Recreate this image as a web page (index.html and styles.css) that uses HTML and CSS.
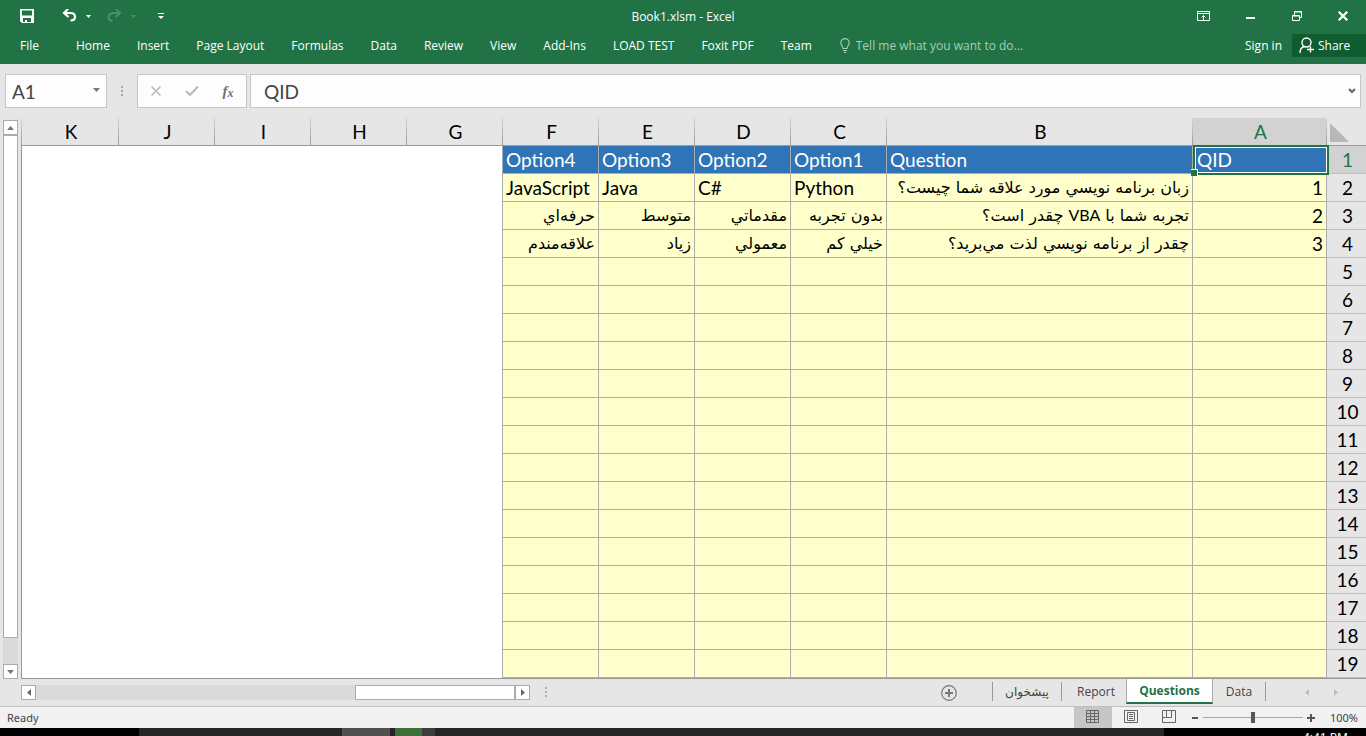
FILE: index.html
```html
<!DOCTYPE html>
<html lang="en">
<head>
<meta charset="utf-8">
<title>Book1.xlsm - Excel</title>
<link rel="stylesheet" href="styles.css">
</head>
<body>
<header class="top">
  <div class="titlebar">
    <div class="quick">
      <button class="tool save" aria-label="Save"><svg width="14" height="14" viewBox="0 0 14 14"><path d="M0 0h14v14H2L0 12zM2 1.500v5h10v-5zM3 9v4h2v-2h2v2h4V9z" fill="#fff" fill-rule="evenodd"/></svg></button>
      <button class="tool undo" aria-label="Undo"><svg width="16" height="14" viewBox="0 0 16 14"><path d="M6 0L2 4l4.500 4M2 4h6.500c6 0 6 7.500 0 7.500" fill="none" stroke="#fff" stroke-width="2.200"/></svg></button>
      <button class="tool undo-more" aria-label="Undo list"><svg width="5" height="3" viewBox="0 0 5 3"><path d="M0 0h5L2.500 3z" fill="#fff"/></svg></button>
      <button class="tool redo" aria-label="Redo"><svg width="16" height="14" viewBox="0 0 16 14"><path d="M9 0l4 4-4.500 4M13 4H7C0 4 0 11.500 5.500 12" fill="none" stroke="#4a9069" stroke-width="2"/></svg></button>
      <button class="tool redo-more" aria-label="Redo list"><svg width="5" height="3" viewBox="0 0 5 3"><path d="M0 0h5L2.500 3z" fill="#4a9069"/></svg></button>
      <button class="tool custom" aria-label="Customize toolbar"><svg width="6" height="6" viewBox="0 0 6 6"><path d="M0 0h6v1H0zM0 3h6L3 6z" fill="#fff"/></svg></button>
    </div>
    <div class="title">Book1.xlsm - Excel</div>
    <div class="window-buttons">
      <button class="tool" aria-label="Ribbon display options"><svg width="13" height="10" viewBox="0 0 13 10"><path d="M.5.5h12v9H.5zM1 2.500h11M6.500 9V4.500M4.500 6.500l2-2 2 2" fill="none" stroke="#fff"/></svg></button>
      <button class="tool" aria-label="Minimize"><svg width="10" height="10" viewBox="0 0 10 10"><path d="M0 6h9v2H0z" fill="#fff"/></svg></button>
      <button class="tool" aria-label="Restore"><svg width="10" height="10" viewBox="0 0 10 10"><path d="M.5 4.500h7v5h-7zM.5 5h7M2.500 4V.5h7v6H8M2.500 1h7" fill="none" stroke="#fff"/></svg></button>
      <button class="tool" aria-label="Close"><svg width="10" height="10" viewBox="0 0 10 10"><path d="M.7.7l8.600 8.600M9.300.7L.7 9.300" stroke="#fff" stroke-width="2.200"/></svg></button>
    </div>
  </div>
  <div class="ribbon">
    <nav class="menu">
      <button class="file">File</button><button>Home</button><button>Insert</button><button>Page Layout</button><button>Formulas</button><button>Data</button><button>Review</button><button>View</button><button>Add-Ins</button><button>LOAD TEST</button><button>Foxit PDF</button><button>Team</button>
    </nav>
    <label class="tell"><svg width="10" height="15" viewBox="0 0 10 15"><path d="M3 10.500C3 8 .8 7.500.8 4.800a4.200 4.200 0 0 1 8.400 0C9.200 7.500 7 8 7 10.500zM3 12.500h4M4 14.300h2" fill="none" stroke="#a2cfb4" stroke-width="1.200"/></svg><input type="text" placeholder="Tell me what you want to do..." aria-label="Tell me what you want to do"></label>
    <div class="account">
      <button class="signin">Sign in</button>
      <button class="share"><svg width="15" height="17" viewBox="0 0 15 17"><circle cx="7.500" cy="5.500" r="4.500" fill="none" stroke="#fff" stroke-width="1.400"/><path d="M1 16c0-4 2-6 4.500-6.500M11.500 9.500v6M8 12.500h7" fill="none" stroke="#fff" stroke-width="1.400"/></svg>Share</button>
    </div>
  </div>
</header>

<section class="formula-bar">
  <div class="name-box"><input type="text" value="A1" aria-label="Name box"><button aria-label="Names"><svg width="7" height="4" viewBox="0 0 7 4"><path d="M0 0h7L3.500 4z" fill="#777"/></svg></button></div>
  <svg class="grip" width="2" height="11" viewBox="0 0 2 11"><path d="M0 0h2v2H0zM0 4h2v2H0zM0 8h2v2H0z" fill="#a6a6a6"/></svg>
  <div class="fx-box">
    <button aria-label="Cancel"><svg width="12" height="12" viewBox="0 0 12 12"><path d="M1.500 1.500l9 9M10.500 1.500l-9 9" stroke="#bcbcbc" stroke-width="1.700"/></svg></button>
    <button aria-label="Enter"><svg width="14" height="12" viewBox="0 0 14 12"><path d="M1 6l4 4 8-8.500" fill="none" stroke="#bcbcbc" stroke-width="2.200"/></svg></button>
    <button class="fx" aria-label="Insert function">f<small>x</small></button>
  </div>
  <div class="entry"><input type="text" value="QID" aria-label="Formula"><button aria-label="Expand formula bar"><svg width="8" height="6" viewBox="0 0 8 6"><path d="M1 1l3 3 3-3" fill="none" stroke="#666" stroke-width="2"/></svg></button></div>
</section>

<main class="work">
  <div class="vscroll">
    <button aria-label="Scroll up"><svg width="7" height="4" viewBox="0 0 7 4"><path d="M0 4h7L3.500 0z" fill="#777"/></svg></button>
    <div class="track"><div class="thumb"></div></div>
    <button aria-label="Scroll down"><svg width="7" height="4" viewBox="0 0 7 4"><path d="M0 0h7L3.500 4z" fill="#777"/></svg></button>
  </div>
  <div class="sheet">
    <table class="grid" dir="rtl">
      <colgroup><col class="c-num"><col class="c-a"><col class="c-b"><col class="c-std"><col class="c-std"><col class="c-std"><col class="c-std"><col class="c-std"><col class="c-std"><col class="c-std"><col class="c-std"><col></colgroup>
      <thead><tr><th class="corner"><svg width="19" height="19" viewBox="0 0 19 19"><path d="M0 0l19 19H0z" fill="#b7b7b7"/></svg></th><th class="picked">A</th><th>B</th><th>C</th><th>D</th><th>E</th><th>F</th><th>G</th><th>H</th><th>I</th><th>J</th><th>K</th></tr></thead>
      <tbody>
        <tr class="heads"><th class="picked">1</th><td class="ltr active">QID<span class="cursor"></span></td><td class="ltr">Question</td><td class="ltr">Option1</td><td class="ltr">Option2</td><td class="ltr">Option3</td><td class="ltr">Option4</td><td class="blank" colspan="5"></td></tr>
        <tr><th>2</th><td class="num">1</td><td lang="fa">زبان برنامه نويسي مورد علاقه شما چيست؟</td><td class="ltr">Python</td><td class="ltr">C#</td><td class="ltr">Java</td><td class="ltr">JavaScript</td><td class="blank" colspan="5"></td></tr>
        <tr><th>3</th><td class="num">2</td><td lang="fa">تجربه شما با <span class="latin">VBA</span> چقدر است؟</td><td lang="fa">بدون تجربه</td><td lang="fa">مقدماتي</td><td lang="fa">متوسط</td><td lang="fa">حرفه‌اي</td><td class="blank" colspan="5"></td></tr>
        <tr><th>4</th><td class="num">3</td><td lang="fa">چقدر از برنامه نويسي لذت مي‌بريد؟</td><td lang="fa">خيلي كم</td><td lang="fa">معمولي</td><td lang="fa">زياد</td><td lang="fa">علاقه‌مندم</td><td class="blank" colspan="5"></td></tr>
        <tr><th>5</th><td></td><td></td><td></td><td></td><td></td><td></td><td class="blank" colspan="5"></td></tr>
        <tr><th>6</th><td></td><td></td><td></td><td></td><td></td><td></td><td class="blank" colspan="5"></td></tr>
        <tr><th>7</th><td></td><td></td><td></td><td></td><td></td><td></td><td class="blank" colspan="5"></td></tr>
        <tr><th>8</th><td></td><td></td><td></td><td></td><td></td><td></td><td class="blank" colspan="5"></td></tr>
        <tr><th>9</th><td></td><td></td><td></td><td></td><td></td><td></td><td class="blank" colspan="5"></td></tr>
        <tr><th>10</th><td></td><td></td><td></td><td></td><td></td><td></td><td class="blank" colspan="5"></td></tr>
        <tr><th>11</th><td></td><td></td><td></td><td></td><td></td><td></td><td class="blank" colspan="5"></td></tr>
        <tr><th>12</th><td></td><td></td><td></td><td></td><td></td><td></td><td class="blank" colspan="5"></td></tr>
        <tr><th>13</th><td></td><td></td><td></td><td></td><td></td><td></td><td class="blank" colspan="5"></td></tr>
        <tr><th>14</th><td></td><td></td><td></td><td></td><td></td><td></td><td class="blank" colspan="5"></td></tr>
        <tr><th>15</th><td></td><td></td><td></td><td></td><td></td><td></td><td class="blank" colspan="5"></td></tr>
        <tr><th>16</th><td></td><td></td><td></td><td></td><td></td><td></td><td class="blank" colspan="5"></td></tr>
        <tr><th>17</th><td></td><td></td><td></td><td></td><td></td><td></td><td class="blank" colspan="5"></td></tr>
        <tr><th>18</th><td></td><td></td><td></td><td></td><td></td><td></td><td class="blank" colspan="5"></td></tr>
        <tr><th>19</th><td></td><td></td><td></td><td></td><td></td><td></td><td class="blank" colspan="5"></td></tr>
      </tbody>
    </table>
  </div>
</main>

<div class="tabbar">
  <div class="hscroll">
    <button aria-label="Scroll left"><svg width="4" height="7" viewBox="0 0 4 7"><path d="M4 0v7L0 3.500z" fill="#666"/></svg></button>
    <div class="track"><div class="thumb"></div></div>
    <button aria-label="Scroll right"><svg width="4" height="7" viewBox="0 0 4 7"><path d="M0 0v7l4-3.500z" fill="#666"/></svg></button>
  </div>
  <svg class="grip" width="2" height="11" viewBox="0 0 2 11"><path d="M0 0h2v2H0zM0 4h2v2H0zM0 8h2v2H0z" fill="#b0b0b0"/></svg>
  <button class="add" aria-label="New sheet"><svg width="16" height="16" viewBox="0 0 16 16"><circle cx="8" cy="8" r="7.300" fill="none" stroke="#777" stroke-width="1.200"/><path d="M8 4v8M4 8h8" stroke="#777" stroke-width="2"/></svg></button>
  <div class="tabs">
    <button class="tab t-home" lang="fa">پيشخوان</button>
    <button class="tab t-report">Report</button>
    <button class="tab t-questions current">Questions</button>
    <button class="tab t-data">Data</button>
  </div>
  <div class="tab-nav">
    <button aria-label="Previous sheets"><svg width="4" height="7" viewBox="0 0 4 7"><path d="M4 0v7L0 3.500z" fill="#bdbdbd"/></svg></button>
    <button aria-label="Next sheets"><svg width="4" height="7" viewBox="0 0 4 7"><path d="M0 0v7l4-3.500z" fill="#bdbdbd"/></svg></button>
  </div>
</div>

<footer class="status">
  <span class="ready">Ready</span>
  <div class="views">
    <button class="on" aria-label="Normal view"><svg width="13" height="13" viewBox="0 0 13 13"><path d="M.5.5h12v12H.5zM.5 3.500h12M.5 6.500h12M.5 9.500h12M4.500.5v12M8.500.5v12" fill="none" stroke="#666"/></svg></button>
    <button aria-label="Page layout view"><svg width="14" height="13" viewBox="0 0 14 13"><path d="M.5.5h13v12H.5zM3.500 2.500h7v8h-7zM5 4.500h4M5 6.500h4M5 8.500h4" fill="none" stroke="#666"/></svg></button>
    <button aria-label="Page break view"><svg width="14" height="13" viewBox="0 0 14 13"><path d="M.5.5h13v12H.5zM4.500.5v7h5v-7M.5 7.500h4" fill="none" stroke="#666"/></svg></button>
  </div>
  <button class="zoom-btn" aria-label="Zoom out"><svg width="8" height="8" viewBox="0 0 8 8"><path d="M1 3h6v2H1z" fill="#555"/></svg></button>
  <input class="zoom" type="range" min="0" max="100" value="50" aria-label="Zoom">
  <button class="zoom-btn" aria-label="Zoom in"><svg width="8" height="8" viewBox="0 0 8 8"><path d="M0 3h8v2H0zM3 0h2v8H3z" fill="#555"/></svg></button>
  <span class="percent">100%</span>
</footer>
<div class="taskbar">
  <div class="seg black-seg"></div><div class="seg dark-seg"></div><div class="seg window-seg"></div><div class="seg gap-seg"></div><div class="seg green-seg"></div><div class="seg gray-seg"></div><div class="seg rest"></div>
  <div class="tray"><span class="clock">4:41 PM</span></div>
</div>
</body>
</html>
```

FILE: styles.css
```css
* { box-sizing: border-box; }
body {
  margin: 0;
  height: 100vh;
  display: flex;
  flex-direction: column;
  overflow: hidden;
  background: #e6e6e6;
  font-family: "Noto Sans", "Open Sans", sans-serif;
  font-size: 12px;
  color: #444;
}
button, input {
  font: inherit;
  color: inherit;
  border: 0;
  padding: 0;
  margin: 0;
  background: none;
}
button { display: flex; align-items: center; justify-content: center; white-space: nowrap; }
svg { display: block; flex: none; }

.top { background: #217346; color: #fff; flex: none; }
.titlebar { display: grid; grid-template-columns: 1fr auto 1fr; height: 32px; }
.quick { display: flex; align-items: center; padding-left: 20px; padding-bottom: 2px; }
.undo { margin-left: 28px; }
.undo-more { margin-left: 8px; }
.redo { margin-left: 16px; }
.redo-more { margin-left: 8px; }
.custom { margin-left: 22px; }
.title { line-height: 34px; font-family: "Open Sans", sans-serif; font-size: 12px; }
.window-buttons { display: flex; align-items: center; justify-content: flex-end; gap: 36px; padding-right: 18px; padding-bottom: 2px; }
.ribbon { display: flex; align-items: center; height: 32px; padding-bottom: 6px; font-family: "Open Sans", sans-serif; }
.menu { display: flex; gap: 27px; padding-left: 20px; }
.menu .file { margin-right: 10px; }
.tell { display: flex; align-items: center; gap: 6px; margin-left: 28px; flex: 1; }
.tell input { flex: 1; min-width: 0; }
.tell input::placeholder { color: #a2cfb4; opacity: 1; }
.account { display: flex; align-items: center; gap: 10px; }
.share { gap: 4px; height: 23px; width: 74px; padding-left: 7px; background: #0e5c2f; justify-content: flex-start; }

.formula-bar { display: flex; align-items: center; flex: none; height: 54px; padding: 0 5px; font-size: 19px; font-family: Lato, sans-serif; }
.name-box, .fx-box, .entry { display: flex; height: 34px; border: 1px solid #c6c6c6; background: #fdfdfd; }
.name-box { width: 102px; padding-left: 6px; }
.name-box input { flex: 1; min-width: 0; }
.name-box button { width: 20px; padding-bottom: 2px; }
.formula-bar .grip { margin: 0 14px; }
.fx-box { width: 110px; }
.fx-box button { flex: 1; }
.fx { font-family: "Liberation Serif", serif; font-style: italic; font-weight: bold; font-size: 15px; color: #707070; }
.fx small { font-size: 12px; padding-top: 4px; }
.entry { flex: 1; margin-left: 3px; padding-left: 13px; }
.entry input { flex: 1; min-width: 0; }
.entry button { width: 16px; }

.work { display: flex; flex: 1; min-height: 0; }
.vscroll { display: flex; flex-direction: column; width: 15px; margin: 2px 3px 0 3px; }
.vscroll button, .hscroll button { width: 15px; height: 15px; flex: none; background: #fff; border: 1px solid #ababab; }
.track { flex: 1; background: #dadada; display: flex; }
.vscroll .thumb { width: 15px; height: 95%; background: #fff; border: 1px solid #ababab; }
.sheet { flex: 1; min-width: 0; overflow: hidden; border-bottom: 1px solid #999; }
.grid { width: 100%; table-layout: fixed; border-collapse: separate; border-spacing: 0; font-family: Lato, sans-serif; font-size: 19px; color: #000; }
.c-num { width: 39px; }
.c-a { width: 134px; }
.c-b { width: 306px; }
.c-std { width: 96px; }
.grid th { height: 28px; padding: 1px 0 0 2px; font-weight: 400; line-height: 24px; background: #e6e6e6; border-bottom: 1px solid #bfbfbf; }
.grid thead th { border-bottom-color: #999; border-right: 1px solid; border-image: linear-gradient(#d8d8d8, #999) 1; }
.grid thead th:last-child { border-left: 1px solid; }
.grid thead .corner { border-right: 0; padding: 2px 17px 0 3px; }
.grid .picked { background: #d2d2d2; color: #217346; }
.grid td { position: relative; height: 28px; padding: 0 3px; line-height: 24px; background: #ffffcc; border-right: 1px solid #adadad; border-bottom: 1px solid #adadad; text-align: right; white-space: nowrap; overflow: hidden; }
.grid .blank { background: #fff; border-bottom: 0; border-left: 1px solid #999; }
.grid .heads td { background: #2e74b6; color: #fff; }
.grid .heads .blank { background: #fff; }
.grid .ltr { direction: ltr; text-align: left; }
.grid td:lang(fa) { font-family: "DejaVu Sans", sans-serif; font-size: 16px; }
.grid .latin { font-family: Lato, sans-serif; }
.grid .active { overflow: visible; z-index: 1; }
.cursor { position: absolute; inset: -1px -2px -2px -1px; border: 2px solid #217346; box-shadow: inset 0 0 0 1px #fff; }
.cursor::after { content: ""; position: absolute; left: -4px; bottom: -3px; width: 6px; height: 6px; background: #217346; border: solid #fff; border-width: 1px 1px 0 0; }

.tabbar { display: flex; align-items: center; flex: none; height: 27px; padding-left: 21px; font-family: "Open Sans", sans-serif; }
.hscroll { display: flex; width: 509px; }
.hscroll .track { justify-content: flex-end; }
.hscroll .thumb { width: 160px; height: 15px; background: #fff; border: 1px solid #ababab; }
.tabbar .grip { margin-left: 15px; }
.add { margin-left: auto; margin-right: 35px; }
.tabs { display: flex; align-self: stretch; }
.tab { height: 19px; margin-top: 3px; border-right: 1px solid #999; }
.tab:lang(fa) { font-family: "DejaVu Sans", sans-serif; font-size: 12px; }
.t-home { width: 70px; border-left: 1px solid #999; }
.t-report { width: 64px; border-right: 0; padding-left: 4px; }
.t-data { width: 53px; }
.current { width: 87px; height: 25px; margin-top: 0; background: #fff; color: #217346; font-weight: 700; border-left: 1px solid #ababab; border-right-color: #ababab; border-bottom: 2px solid #217346; }
.tab-nav { display: flex; gap: 25px; padding: 0 28px 0 39px; }

.status { display: flex; align-items: center; flex: none; height: 22px; padding: 0 8px 0 7px; background: #f1f1f1; border-top: 1px solid #c0c0c0; font-size: 11px; }
.ready, .percent { padding-bottom: 1px; }
.views { display: flex; align-self: stretch; margin-left: auto; margin-right: 2px; }
.views button { width: 38px; padding-bottom: 2px; }
.views .on { background: #c6c6c6; }
.zoom-btn { width: 10px; }
.zoom { appearance: none; width: 100px; height: 12px; margin: 0 3px; background: linear-gradient(#aaa, #aaa) center / 100% 1px no-repeat; }
.zoom::-webkit-slider-thumb { appearance: none; width: 4px; height: 11px; background: #555; }
.percent { margin-left: 14px; }

.taskbar { display: flex; flex: none; height: 8px; overflow: hidden; background: #262626; }
.black-seg { width: 139px; background: #000; }
.dark-seg { width: 203px; }
.window-seg { width: 48px; background: #505050; }
.gap-seg { width: 5px; }
.green-seg { width: 27px; background: #3d6f3b; }
.gray-seg { width: 13px; background: #3c3c3c; }
.rest { flex: 1; }
.tray { width: 202px; padding: 2px 18px 0 0; background: #000; color: #fff; text-align: right; line-height: 16px; }
```
